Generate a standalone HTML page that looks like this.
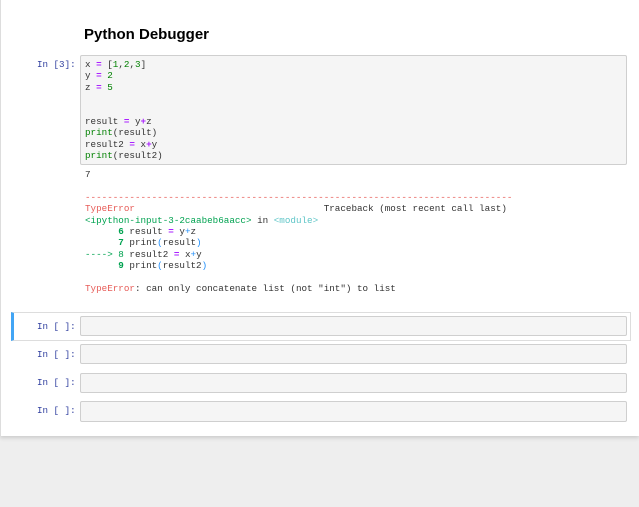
<!DOCTYPE html>
<html><head><style>
body{margin:0;width:639px;height:507px;background:#eeeeee;position:relative;overflow:hidden;font-family:"Liberation Mono",monospace;}
#panel{position:absolute;left:0;top:0;width:639px;height:436px;background:#fff;border-left:1px solid #ddd;box-shadow:0 2px 4px rgba(0,0,0,0.15);box-sizing:border-box;}
.abs{position:absolute;}
h1{position:absolute;left:83px;top:26px;margin:0;font:bold 15px "Liberation Sans",sans-serif;color:#000;}
.pre{position:absolute;font-size:9.25px;line-height:11.4px;white-space:pre;color:#333;}
.lbl{position:absolute;left:36px;font-size:9.2px;color:#303f9f;white-space:pre;}
.inp{position:absolute;left:79px;width:547px;background:#f5f5f5;border:1px solid #cfcfcf;border-radius:2px;box-sizing:border-box;}
.o{color:#aa22ff;font-weight:bold}.n{color:#008000}.k{color:#008000}
.r{color:#e75c58}.g{color:#00a250}.c{color:#60c6c8}.b{color:#208ffb}.gb{color:#00a250;font-weight:bold}
</style></head><body>
<div id="panel">
<h1>Python Debugger</h1>
<div class="lbl" style="top:59px">In [3]:</div>
<div class="inp" style="top:55px;height:110px"></div>
<div class="pre" style="left:84px;top:59px">x <span class="o">=</span> [<span class="n">1</span>,<span class="n">2</span>,<span class="n">3</span>]
y <span class="o">=</span> <span class="n">2</span>
z <span class="o">=</span> <span class="n">5</span>


result <span class="o">=</span> y<span class="o">+</span>z
<span class="k">print</span>(result)
result2 <span class="o">=</span> x<span class="o">+</span>y
<span class="k">print</span>(result2)</div>
<div class="pre" style="left:84px;top:169px">7

<span class="r">-----------------------------------------------------------------------------</span>
<span class="r">TypeError</span>                                  Traceback (most recent call last)
<span class="g">&lt;ipython-input-3-2caabeb6aacc&gt;</span> in <span class="c">&lt;module&gt;</span>
<span class="gb">      6</span> result <span class="o">=</span> y<span class="b">+</span>z
<span class="gb">      7</span> print<span class="b">(</span>result<span class="b">)</span>
<span class="g">----&gt; 8</span> result2 <span class="o">=</span> x<span class="b">+</span>y
<span class="gb">      9</span> print<span class="b">(</span>result2<span class="b">)</span>

<span class="r">TypeError</span>: can only concatenate list (not "int") to list</div>
<div class="abs" style="left:10px;top:312px;width:620px;height:29px;border:1px solid #ddd;box-sizing:border-box;border-left:3px solid #42a5f5"></div>
<div class="lbl" style="top:321px">In [ ]:</div>
<div class="inp" style="top:316px;height:20px"></div>
<div class="lbl" style="top:349px">In [ ]:</div>
<div class="inp" style="top:344px;height:20px"></div>
<div class="lbl" style="top:377px">In [ ]:</div>
<div class="inp" style="top:373px;height:20px"></div>
<div class="lbl" style="top:405px">In [ ]:</div>
<div class="inp" style="top:401px;height:21px"></div>
</div>
</body></html>
